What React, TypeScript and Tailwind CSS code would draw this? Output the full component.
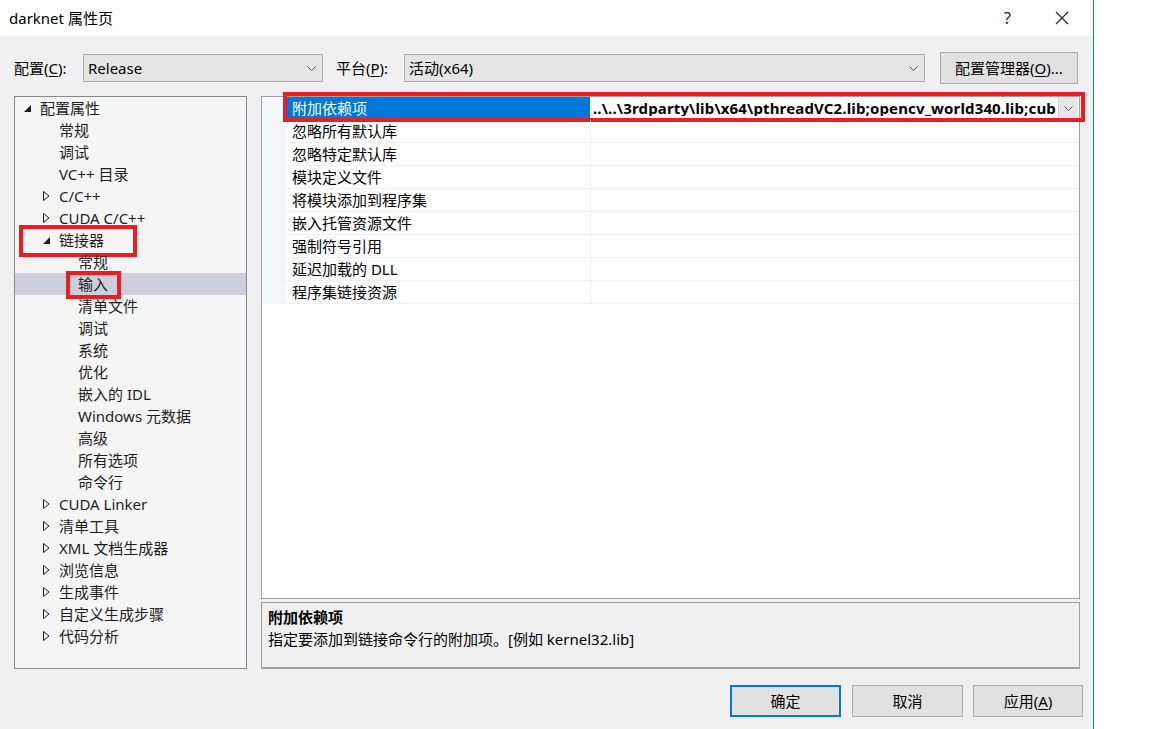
import React from "react";

type TreeItem = { label: string; level: number; state?: "open" | "closed"; selected?: boolean; mark?: "linker" | "input" };

const tree: TreeItem[] = [
  { label: "配置属性", level: 0, state: "open" },
  { label: "常规", level: 1 },
  { label: "调试", level: 1 },
  { label: "VC++ 目录", level: 1 },
  { label: "C/C++", level: 1, state: "closed" },
  { label: "CUDA C/C++", level: 1, state: "closed" },
  { label: "链接器", level: 1, state: "open", mark: "linker" },
  { label: "常规", level: 2 },
  { label: "输入", level: 2, selected: true, mark: "input" },
  { label: "清单文件", level: 2 },
  { label: "调试", level: 2 },
  { label: "系统", level: 2 },
  { label: "优化", level: 2 },
  { label: "嵌入的 IDL", level: 2 },
  { label: "Windows 元数据", level: 2 },
  { label: "高级", level: 2 },
  { label: "所有选项", level: 2 },
  { label: "命令行", level: 2 },
  { label: "CUDA Linker", level: 1, state: "closed" },
  { label: "清单工具", level: 1, state: "closed" },
  { label: "XML 文档生成器", level: 1, state: "closed" },
  { label: "浏览信息", level: 1, state: "closed" },
  { label: "生成事件", level: 1, state: "closed" },
  { label: "自定义生成步骤", level: 1, state: "closed" },
  { label: "代码分析", level: 1, state: "closed" },
];

const props = [
  "附加依赖项",
  "忽略所有默认库",
  "忽略特定默认库",
  "模块定义文件",
  "将模块添加到程序集",
  "嵌入托管资源文件",
  "强制符号引用",
  "延迟加载的 DLL",
  "程序集链接资源",
];

const Chevron = ({ className = "" }: { className?: string }) => (
  <svg width="9" height="5" viewBox="0 0 9 5" className={className}>
    <path d="M0.5 0.5 L4.5 4.5 L8.5 0.5" fill="none" stroke="#555" strokeWidth="1" />
  </svg>
);

const Triangle = ({ state }: { state: "open" | "closed" }) =>
  state === "open" ? (
    <svg width="7" height="7" viewBox="0 0 7 7">
      <path d="M7 0 L7 7 L0 7 Z" fill="#1e1e1e" />
    </svg>
  ) : (
    <svg width="7" height="10" viewBox="0 0 7 10">
      <path d="M0.5 0.5 L6 5 L0.5 9.5 Z" fill="none" stroke="#1e1e1e" strokeWidth="1" />
    </svg>
  );

export default function App() {
  return (
    <div className="flex h-[729px] w-[1152px] overflow-hidden bg-white font-['Noto_Sans','Noto_Sans_CJK_SC',sans-serif] text-[15px] text-black">
      <div className="flex h-full w-[1094px] shrink-0 flex-col border-r border-[#1979ca] bg-[#f0f0f0]">
        {/* title bar */}
        <div className="flex h-[36px] shrink-0 items-center bg-white pl-[9px]">
          <span className="leading-none">darknet 属性页</span>
          <span className="ml-auto mr-[44px] text-[16px] leading-none text-[#222]">?</span>
          <svg width="14" height="14" viewBox="0 0 14 14" className="mr-[24px]">
            <path d="M1 1 L13 13 M13 1 L1 13" stroke="#222" strokeWidth="1.1" />
          </svg>
        </div>

        {/* config row */}
        <div className="mt-[16px] flex h-[32px] shrink-0 items-center pl-[14px]">
          <span className="w-[69px]">
            配置(<span className="underline underline-offset-2">C</span>):
          </span>
          <div className="flex h-[28px] w-[240px] items-center justify-between border border-[#adadad] bg-[#e5e5e5] pl-[4px] pr-[6px]">
            <span>Release</span>
            <Chevron />
          </div>
          <span className="ml-[13px] w-[68px]">
            平台(<span className="underline underline-offset-2">P</span>):
          </span>
          <div className="flex h-[28px] w-[521px] items-center justify-between border border-[#adadad] bg-[#e5e5e5] pl-[4px] pr-[6px]">
            <span>活动(x64)</span>
            <Chevron />
          </div>
          <button className="ml-[15px] flex h-[32px] w-[138px] items-center justify-center border border-[#adadad] bg-[#e1e1e1]">
            配置管理器(<span className="underline underline-offset-2">O</span>)...
          </button>
        </div>

        {/* main */}
        <div className="mt-[12px] flex h-[573px] shrink-0 gap-[14px] pl-[14px]">
          {/* tree */}
          <div className="w-[233px] shrink-0 border border-[#828790] bg-[#f5f5f5] text-[#1e1e1e]">
            {tree.map((t, i) => (
              <div
                key={i}
                className={`relative flex h-[22px] items-center ${t.selected ? "bg-[#cccedb]" : ""}`}
              >
                <div style={{ width: t.level * 19 }} className="shrink-0" />
                <div className="flex w-[25px] shrink-0 items-center pl-[9px]">
                  {t.state && <Triangle state={t.state} />}
                </div>
                <span className="whitespace-nowrap leading-none">{t.label}</span>
                {t.mark === "linker" && (
                  <div className="absolute left-[4px] top-[-4px] h-[32px] w-[118px] border-4 border-[#ec1c24]" />
                )}
                {t.mark === "input" && (
                  <div className="absolute left-[51px] top-[-2px] h-[28px] w-[55px] border-4 border-[#ec1c24]" />
                )}
              </div>
            ))}
          </div>

          {/* right column */}
          <div className="flex w-[819px] shrink-0 flex-col gap-[3px]">
            <div className="flex h-[503px] shrink-0 border border-[#a0a0a0] bg-white">
              <div className="w-[24px] shrink-0 self-stretch bg-[#f4f7fc]" style={{ height: props.length * 23 }} />
              <div className="flex-1">
                {props.map((p, i) => (
                  <div key={p} className="relative flex h-[23px] border-b border-[#f0f0f0]">
                    <div
                      className={`flex w-[305px] shrink-0 items-center border-r border-[#f0f0f0] pl-[6px] ${
                        i === 0 ? "bg-[#0078d7] text-white" : ""
                      }`}
                    >
                      <span className="whitespace-nowrap leading-none">{p}</span>
                    </div>
                    {i === 0 && (
                      <div className="flex min-w-0 flex-1 items-center">
                        <span className="min-w-0 flex-1 overflow-hidden whitespace-nowrap pl-[2px] font-bold leading-none tracking-[0.15px]">
                          ..\..\3rdparty\lib\x64\pthreadVC2.lib;opencv_world340.lib;cub
                        </span>
                        <div className="mr-[1px] flex h-[22px] w-[20px] shrink-0 items-center justify-center border-l border-[#d0d0d0] bg-[#e6e6e6]">
                          <Chevron />
                        </div>
                      </div>
                    )}
                    {i === 0 && (
                      <div className="absolute left-[-3px] top-[-5px] h-[30px] w-[802px] border-4 border-[#ec1c24]" />
                    )}
                  </div>
                ))}
              </div>
            </div>
            <div className="h-[67px] shrink-0 border border-b-2 border-[#a0a0a0] bg-[#f0f0f0] pl-[6px] pt-[3px]">
              <div className="font-bold leading-[22px]">附加依赖项</div>
              <div className="leading-[22px]">指定要添加到链接命令行的附加项。[例如 kernel32.lib]</div>
            </div>
          </div>
        </div>

        {/* footer */}
        <div className="mt-[16px] flex h-[32px] shrink-0 justify-end pr-[10px]">
          <button className="flex h-[32px] w-[111px] items-center justify-center border-2 border-[#0078d7] bg-[#e1e1e1]">
            确定
          </button>
          <button className="ml-[11px] flex h-[32px] w-[111px] items-center justify-center border border-[#adadad] bg-[#e1e1e1]">
            取消
          </button>
          <button className="ml-[10px] flex h-[32px] w-[110px] items-center justify-center border border-[#adadad] bg-[#e1e1e1]">
            应用(<span className="underline underline-offset-2">A</span>)
          </button>
        </div>
      </div>
    </div>
  );
}
